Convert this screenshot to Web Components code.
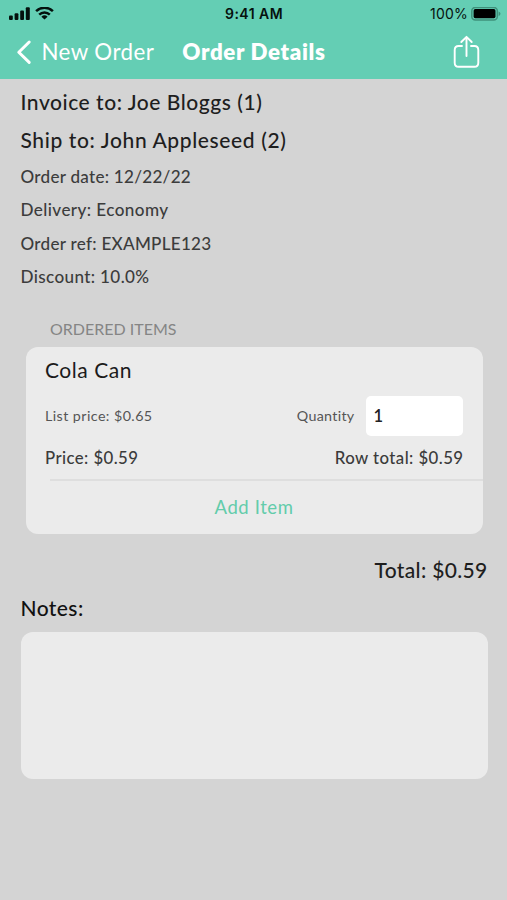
<!DOCTYPE html>
<html lang="en"><head><meta charset="utf-8"><title>Order Details</title>
<style>
html,body{margin:0;height:100%}
body{background:#d4d4d4;font-family:Lato,"Open Sans",sans-serif;overflow:hidden}
</style></head><body>
<order-screen></order-screen>
<script>
const define=(name,html,init)=>{
  const t=document.createElement('template');t.innerHTML=html;
  customElements.define(name,class extends HTMLElement{
    constructor(){super();this.attachShadow({mode:'open'}).append(t.content.cloneNode(true));}
    connectedCallback(){if(init)init.call(this);}
  });
};
// A single-line label; the "track" attribute is its letter spacing in px.
define('text-label','<style>:host{display:block;white-space:nowrap;width:max-content}</style><slot></slot>',function(){
  this.style.letterSpacing=(this.getAttribute('track')||0)+'px';
});
define('status-bar',`<style>
:host{display:grid;grid-template-columns:1fr auto 1fr;align-items:center;height:28px;padding:0 6px 0 8px;font:600 14px/28px Inter,sans-serif;color:#06110e}
.l{display:flex;align-items:center;gap:4px}.r{display:flex;align-items:center;justify-content:flex-end;gap:3px;font-weight:400}
svg{display:block}text-label{margin-right:1px}.r text-label{margin:0}</style>
<div class="l"><svg width="23" height="14" viewBox="0 0 23 14"><g fill="#04110d"><rect x="1" y="8.5" width="3.8" height="4.5" rx="1"/><rect x="6.6" y="6.3" width="3.8" height="6.7" rx="1"/><rect x="12.2" y="3.6" width="3.8" height="9.4" rx="1"/><rect x="17.8" y="0.2" width="4" height="12.8" rx="1"/></g></svg>
<svg width="19" height="14" viewBox="0 0 19 14"><g fill="none" stroke="#04110d" stroke-width="2.5"><path d="M1.1 4.2a12 12 0 0 1 16.8 0"/><path d="M4.2 7.7a7.6 7.6 0 0 1 10.6 0"/></g><path d="M9.5 12.6L6.4 9.7a4.5 4.5 0 0 1 6.2 0z" fill="#04110d"/></svg></div>
<text-label track=".45">9:41 AM</text-label>
<div class="r"><text-label track=".2">100%</text-label><svg width="30" height="15" viewBox="0 0 30 15"><rect x=".8" y=".4" width="25.5" height="12.6" rx="3.5" fill="none" stroke="#3f917b" stroke-width="1.5"/><rect x="2.6" y="2.1" width="21.9" height="9.2" rx="1.7"/><path d="M27.6 4.4v4.8q1.9-.9 1.9-2.4t-1.9-2.4" fill="#3f917b"/></svg></div>`);
define('nav-bar',`<style>
:host{display:flex;align-items:center;height:51px;box-sizing:border-box;padding:0 27px 3px 16px;font-size:22.3px;line-height:30px;color:#fff}
svg{display:block}.b{margin-left:9.5px}.t{font-weight:800;margin-left:28px}.s{margin:-1px 0 0 auto}</style>
<svg width="16" height="26" viewBox="0 0 16 26"><path d="M13.2 3L2.8 13.2L13.2 23.4" fill="none" stroke="#fff" stroke-width="3" stroke-linecap="round" stroke-linejoin="round"/></svg>
<text-label class="b" track=".44">New Order</text-label><text-label class="t" track=".66">Order Details</text-label>
<svg class="s" width="27" height="34" viewBox="0 0 27 34"><g fill="none" stroke="#fff" stroke-width="1.9" stroke-linecap="round" stroke-linejoin="round"><path d="M9 11H5.6Q1.7 11 1.7 15V27.7Q1.7 31.8 5.6 31.8H21.4Q25.3 31.8 25.3 27.7V15Q25.3 11 21.4 11H18"/><path d="M13.5 21V2M8.3 7L13.5 1.8L18.7 7"/></g></svg>`);
define('order-item',`<style>
:host{display:flex;flex-direction:column;background:#ebebeb;border-radius:12px;height:187px;overflow:hidden;color:#3b3b3b}
.n{font-size:21px;line-height:28px;color:#1b1b1b;margin:9.5px 19.5px 11.5px}
.r{display:flex;align-items:center;justify-content:space-between;margin:0 20px 0 19.5px}
.q{display:flex;align-items:center;font-size:14.3px;color:#555}.g{display:flex;align-items:center;gap:11px}
.i{width:97px;height:40px;box-sizing:border-box;background:#fff;border-radius:5px;padding-left:8px;font:600 16.5px/40px Lato,sans-serif;color:#222}
.p{font-size:16.8px;line-height:24px;font-weight:500;margin:10.5px 19px 0 19.5px}
.d{height:1.5px;background:#dedede;margin:9px 0 0 24px}
.a{display:flex;justify-content:center;color:#62ccaa;font-size:18.5px;line-height:52px}</style>
<div class="n"><text-label track=".54">Cola Can</text-label></div>
<div class="r q"><text-label track=".42">List price: $0.65</text-label><div class="g"><text-label track=".3">Quantity</text-label><div class="i">1</div></div></div>
<div class="r p"><text-label track=".42">Price: $0.59</text-label><text-label track=".43">Row total: $0.59</text-label></div>
<div class="d"></div><div class="a"><text-label track=".59">Add Item</text-label></div>`);
define('order-screen',`<style>
:host{display:block;height:900px;width:507px;background:#d4d4d4}
header{background:#64ceb4;height:79px}
main{display:flex;flex-direction:column;padding:4px 19.5px 0 20.5px;color:#1e1e1e;font-weight:500}
.b{font-size:21px;line-height:38px}.m{font-size:17.1px;line-height:33.4px;color:#3c3c3c}
.f{margin-top:1px}
.h{font-size:16px;line-height:24px;color:#858585;margin:23px 0 6px 29.5px;font-weight:400}
order-item{margin:0 5px;font-weight:400}
.t{align-self:flex-end;margin-top:17px}.nn{color:#111;margin-top:.5px}
.box{height:147px;border-radius:12px;background:#ebebeb;margin-top:5px}</style>
<header><status-bar></status-bar><nav-bar></nav-bar></header>
<main>
<text-label class="b" track=".54">Invoice to: Joe Bloggs (1)</text-label>
<text-label class="b" track=".62">Ship to: John Appleseed (2)</text-label>
<text-label class="m f" track=".26">Order date: 12/22/22</text-label>
<text-label class="m" track=".42">Delivery: Economy</text-label>
<text-label class="m" track=".27">Order ref: EXAMPLE123</text-label>
<text-label class="m" track=".36">Discount: 10.0%</text-label>
<text-label class="h" track="0">ORDERED ITEMS</text-label>
<order-item></order-item>
<text-label class="b t" track=".33">Total: $0.59</text-label>
<text-label class="b nn" track=".42">Notes:</text-label>
<div class="box"></div>
</main>`);
</script></body></html>
